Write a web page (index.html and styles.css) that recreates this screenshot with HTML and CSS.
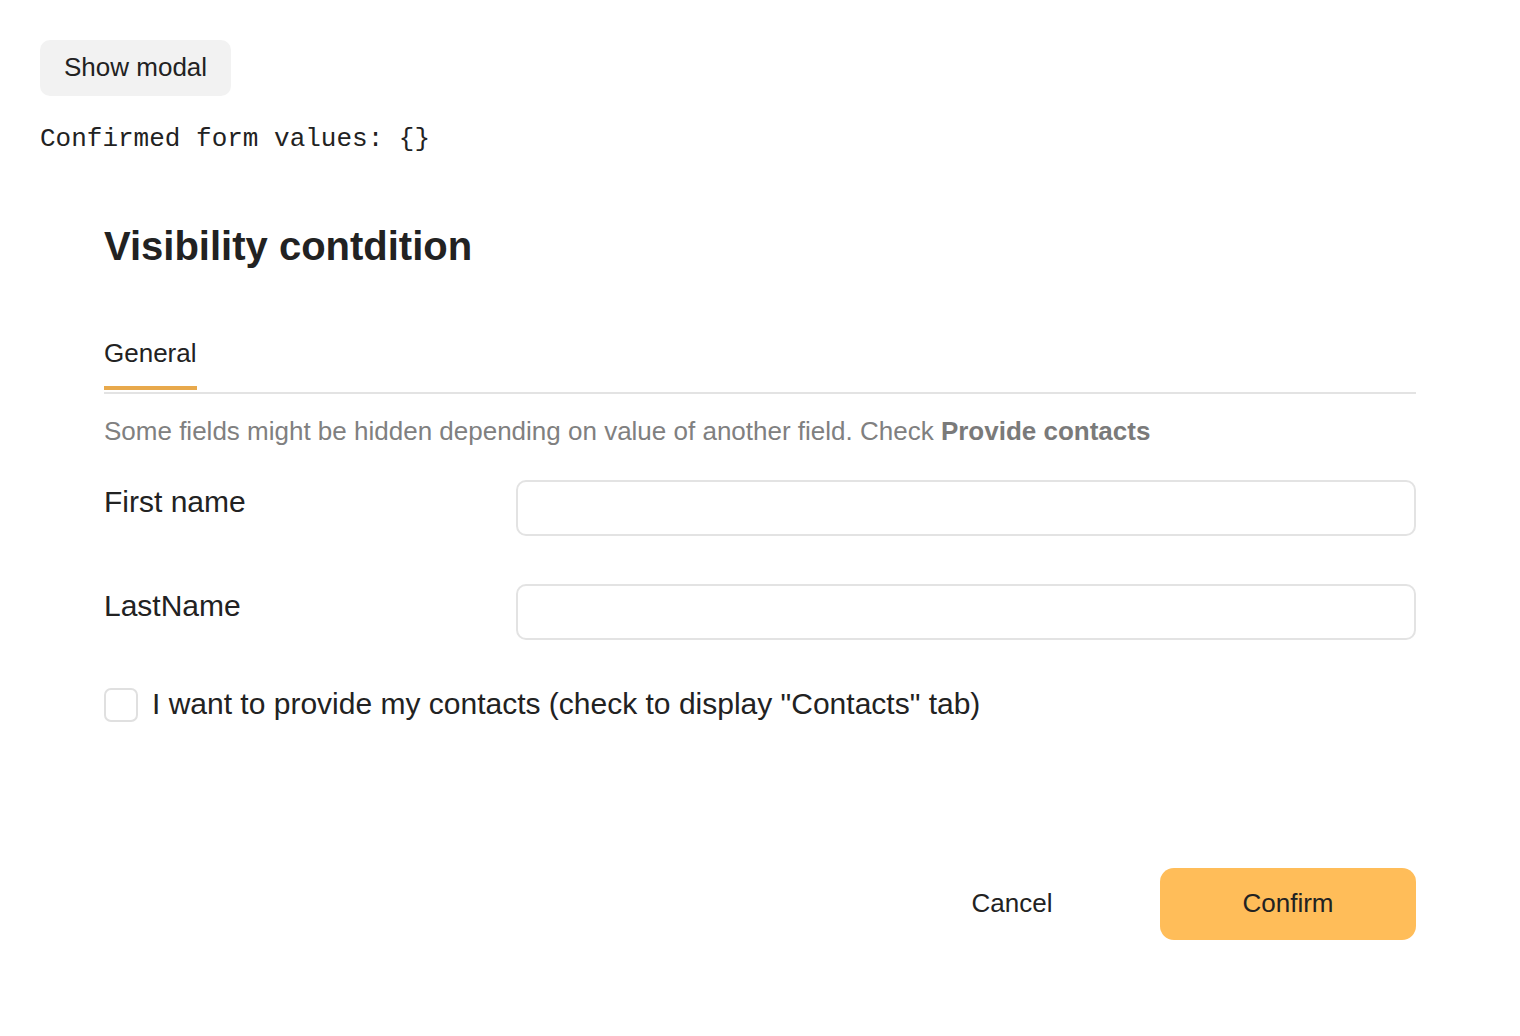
FILE: index.html
```html
<!DOCTYPE html>
<html lang="en">
<head>
<meta charset="utf-8">
<title>Visibility condition</title>
<link rel="stylesheet" href="styles.css">
</head>
<body>
  <button class="show-btn" type="button">Show modal</button>
  <pre class="values">Confirmed form values: {}</pre>

  <section class="modal">
    <h2 class="modal-title">Visibility contdition</h2>

    <div class="tabs">
      <div class="tab active">General</div>
    </div>

    <p class="hint">Some fields might be hidden depending on value of another field. Check <b>Provide contacts</b></p>

    <div class="fields">
      <div class="field">
        <label class="field-label" for="fn">First name</label>
        <input class="field-input" id="fn" type="text">
      </div>
      <div class="field">
        <label class="field-label" for="ln">LastName</label>
        <input class="field-input" id="ln" type="text">
      </div>
      <label class="check">
        <span class="check-box"></span>
        <span class="check-text">I want to provide my contacts (check to display "Contacts" tab)</span>
      </label>
    </div>

    <div class="actions">
      <button class="btn btn-cancel" type="button">Cancel</button>
      <button class="btn btn-confirm" type="button">Confirm</button>
    </div>
  </section>
</body>
</html>
```

FILE: styles.css
```css
* { box-sizing: border-box; }

body {
  margin: 0;
  padding: 40px;
  font-family: "Liberation Sans", Arial, sans-serif;
  font-size: 26px;
  color: #222;
  background: #fff;
}

.show-btn {
  display: block;
  height: 56px;
  padding: 0 24px 2px;
  border: none;
  border-radius: 10px;
  background: #f2f2f2;
  font-family: inherit;
  font-size: 26px;
  line-height: 30px;
  color: #222;
}

.values {
  margin: 27px 0 0;
  font-family: "Liberation Mono", monospace;
  font-size: 26px;
  line-height: 32px;
  color: #222;
}

.modal {
  width: 1312px;
  margin: 67px 0 0 64px;
}

.modal-title {
  margin: 0;
  font-size: 40px;
  line-height: 48px;
  font-weight: bold;
  color: #222;
}

.tabs {
  display: flex;
  margin-top: 68px;
  padding-bottom: 2px;
  border-bottom: 2px solid #e3e3e3;
}

.tab {
  font-size: 26px;
  line-height: 30px;
  padding-bottom: 18px;
  border-bottom: 4px solid #e8a94c;
  color: #222;
}

.hint {
  margin: 22px 0 0;
  font-size: 26px;
  line-height: 30px;
  color: #808080;
}

.hint b { color: #7a7a7a; }

.fields {
  display: flex;
  flex-direction: column;
  gap: 48px;
  margin-top: 34px;
}

.field {
  display: grid;
  grid-template-columns: 412px 1fr;
  align-items: start;
}

.field-label {
  padding-top: 5px;
  font-size: 30px;
  line-height: 34px;
  color: #222;
}

.field-input {
  height: 56px;
  border: 2px solid #e3e3e3;
  border-radius: 10px;
  background: #fff;
  font-family: inherit;
  font-size: 26px;
  padding: 0 16px;
}

.check {
  display: flex;
  align-items: center;
  gap: 14px;
  height: 34px;
}

.check-box {
  flex: none;
  width: 34px;
  height: 34px;
  border: 2px solid #e0e0e0;
  border-radius: 7px;
  background: #fff;
}

.check-text {
  font-size: 30px;
  line-height: 34px;
  margin-top: -2px;
  color: #222;
}

.actions {
  display: flex;
  justify-content: flex-end;
  gap: 20px;
  margin-top: 146px;
}

.btn {
  width: 256px;
  height: 72px;
  border: none;
  border-radius: 14px;
  font-family: inherit;
  font-size: 26px;
  line-height: 30px;
  padding: 0 0 2px;
  color: #222;
}

.btn-cancel { background: transparent; }

.btn-confirm { background: #ffbd59; }
```
